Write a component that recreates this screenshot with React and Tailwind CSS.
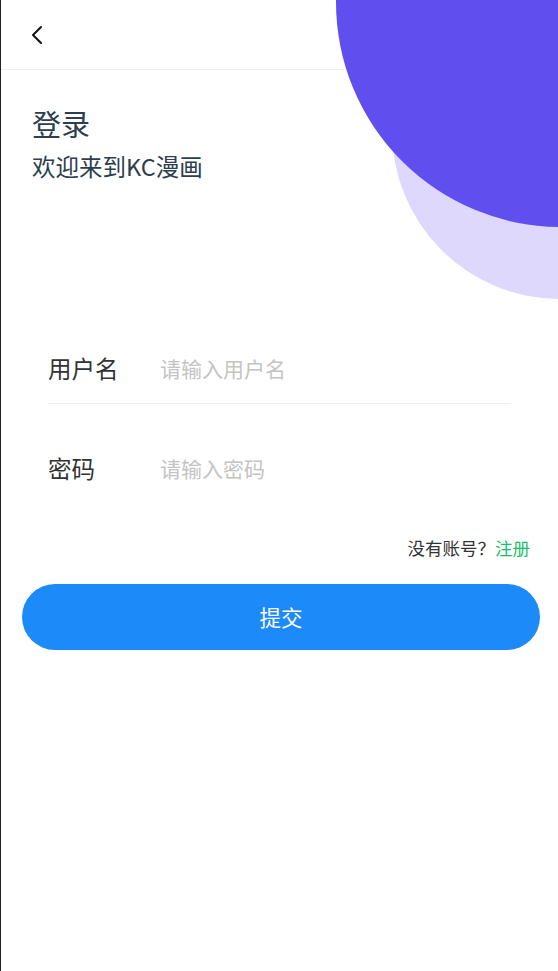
import { useState } from "react";

const FONT = { fontFamily: '"Noto Sans CJK SC", "Noto Sans", sans-serif' };

export default function App() {
  const [form, setForm] = useState({ username: "", password: "" });

  return (
    <div style={FONT} className="relative w-[558px] h-[971px] bg-white overflow-hidden border-l border-[#222]">
      {/* header */}
      <div className="h-[70px] border-b border-[#f0f0f0] flex items-center pl-[29px]">
        <svg width="14" height="20" viewBox="0 0 14 20" fill="none">
          <path d="M11 2 L3 10 L11 18" stroke="#111" strokeWidth="2" strokeLinecap="round" strokeLinejoin="round" />
        </svg>
      </div>

      {/* decorative circles */}
      <div className="absolute left-[391px] top-[-37px] w-[336px] h-[336px] rounded-full bg-[#ddd8fc]" />
      <div className="absolute left-[335px] top-[-223px] w-[450px] h-[450px] rounded-full bg-[#614eee]" />

      <div className="relative pl-[31px] mt-[33px]">
        <h1 className="text-[29px] leading-[40px] text-[#2c3e50]">登录</h1>
        <p className="mt-[7px] text-[23.5px] leading-[32px] text-[#2c3e50]">欢迎来到KC漫画</p>
      </div>

      {/* form */}
      <div className="mt-[152px] px-[47px]">
        <div className="h-[70px] flex items-center border-b border-[#efefef]">
          <span className="w-[112px] text-[23.5px] text-[#333]">用户名</span>
          <input
            value={form.username}
            onChange={(e) => setForm({ ...form, username: e.target.value })}
            placeholder="请输入用户名"
            className="flex-1 text-[21px] outline-none bg-transparent placeholder:text-[#c4c4c4]"
          />
        </div>
        <div className="mt-[30px] h-[70px] flex items-center">
          <span className="w-[112px] text-[23.5px] text-[#333]">密码</span>
          <input
            type="password"
            value={form.password}
            onChange={(e) => setForm({ ...form, password: e.target.value })}
            placeholder="请输入密码"
            className="flex-1 text-[21px] outline-none bg-transparent placeholder:text-[#c4c4c4]"
          />
        </div>
      </div>

      <div className="mt-[32px] pr-[28px] flex justify-end text-[17.5px] leading-[24px]">
        <span className="text-[#333]">没有账号？</span>
        <span className="text-[#19be6b]">注册</span>
      </div>

      <button className="mt-[24px] ml-[21px] w-[518px] h-[66px] rounded-full bg-[#1c8af9] text-white text-[21.5px]">
        提交
      </button>
    </div>
  );
}
